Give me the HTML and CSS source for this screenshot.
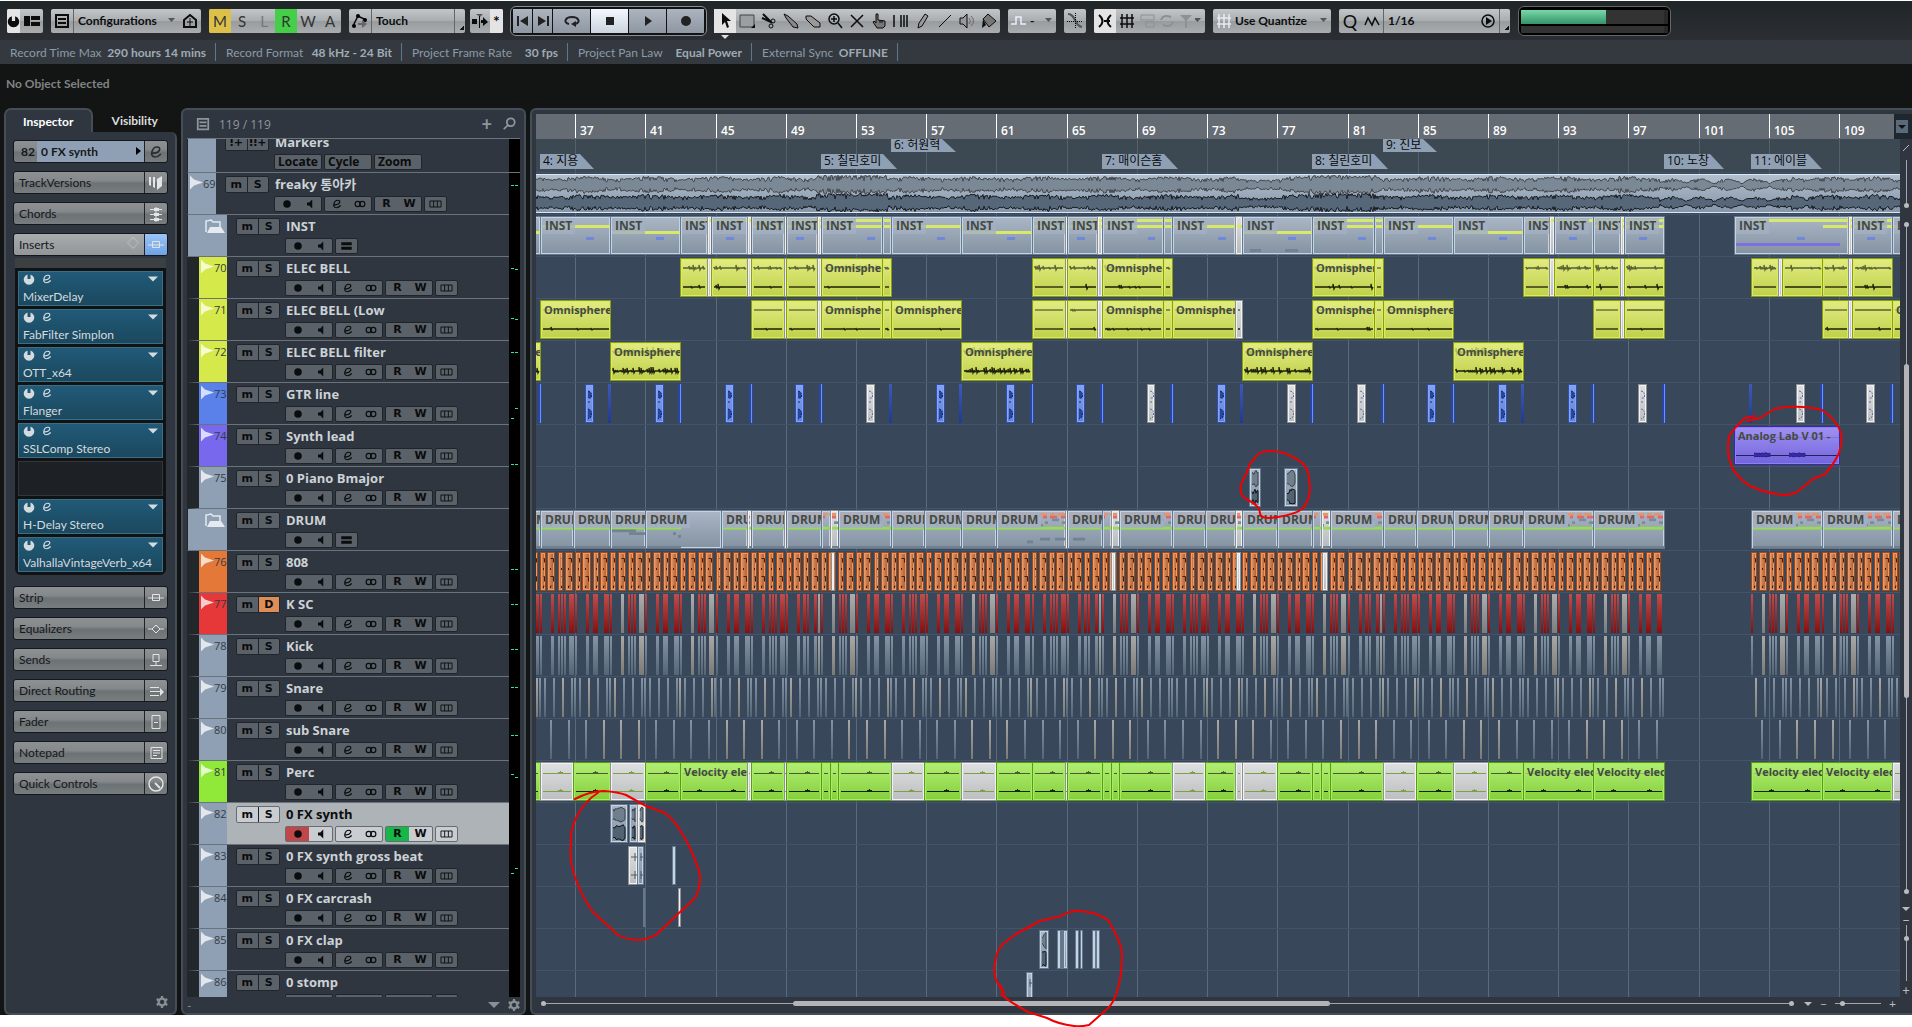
FILE: index.html
```html
<!DOCTYPE html>
<html lang="en">
<head>
    <meta charset="utf-8">
    <title>Project</title>
    <link rel="stylesheet" href="styles.css">
</head>
<body>
    <svg class="sprite">
        <symbol id="power2" viewBox="0 0 16 16"><path fill="currentColor" d="M6 2v6h4V2a7 7 0 1 1-4 0z"/></symbol>
        <symbol id="layout" viewBox="0 0 16 16"><path fill="currentColor" d="M0 3h6v10H0zM7 3h9v4H7zM7 9h9v4H7z"/></symbol>
        <symbol id="list" viewBox="0 0 16 16"><path fill="none" stroke="currentColor" stroke-width="2" d="M2 2h12v12H2zM4 6h8M4 10h8"/></symbol>
        <symbol id="home" viewBox="0 0 16 16"><path fill="none" stroke="currentColor" stroke-width="2" d="M2 7l6-5 6 5v7H2z"/><path stroke="currentColor" d="M8 5v8M5 9h6"/></symbol>
        <symbol id="auto" viewBox="0 0 16 16"><path fill="none" stroke="currentColor" stroke-width="1.500" d="M1 13L6 3l8 4"/><circle cx="6" cy="3" r="2"/><circle cx="13" cy="7" r="2"/><circle cx="2" cy="13" r="2"/><path fill="#666" d="M6 10h4V7l5 4-5 4v-3H6z"/></symbol>
        <symbol id="scroll" viewBox="0 0 16 16"><path fill="currentColor" d="M0 6h5v5H0zM9 7h2V4l5 5-5 4v-3H9z"/><path fill="#555" d="M4 1h7L8 4z"/><path stroke="currentColor" d="M7.500 3v12"/></symbol>
        <symbol id="prev" viewBox="0 0 16 16"><path fill="currentColor" d="M2 3h2v10H2zM13 3v10L5 8z"/></symbol>
        <symbol id="next" viewBox="0 0 16 16"><path fill="currentColor" d="M12 3h2v10h-2zM3 3v10l8-5z"/></symbol>
        <symbol id="cycle" viewBox="0 0 16 16"><path fill="none" stroke="currentColor" stroke-width="2" d="M5 11C-1 10 1 4 8 4s9 6 3 7"/><path fill="currentColor" d="M7 11l5-3v6z"/></symbol>
        <symbol id="stop" viewBox="0 0 16 16"><path fill="currentColor" d="M4 4h8v8H4z"/></symbol>
        <symbol id="play" viewBox="0 0 16 16"><path fill="currentColor" d="M5 3l7 5-7 5z"/></symbol>
        <symbol id="rec" viewBox="0 0 16 16"><circle cx="8" cy="8" r="5" fill="currentColor"/></symbol>
        <symbol id="arrow" viewBox="0 0 16 16"><path fill="currentColor" d="M5 0v12l3-3 2 6 2-1-2-6h4z"/></symbol>
        <symbol id="range" viewBox="0 0 16 16"><path fill="#999fa3" stroke="#444" d="M1 2h14v12H1z"/><path fill="currentColor" d="M16 11v4h-4z"/></symbol>
        <symbol id="scissors" viewBox="0 0 16 16"><path fill="none" stroke="currentColor" stroke-width="2" d="M2 1l9 9M1 5l9 4"/><circle cx="12" cy="8" r="2" fill="none" stroke="currentColor"/><circle cx="10" cy="13" r="2" fill="none" stroke="currentColor"/></symbol>
        <symbol id="glue" viewBox="0 0 16 16"><path fill="#888" stroke="currentColor" d="M1 1l4 2 9 8 1 4-5-1-7-9z"/></symbol>
        <symbol id="erase" viewBox="0 0 16 16"><path fill="#999" stroke="currentColor" d="M1 3h5l9 7v4H9L1 6z"/></symbol>
        <symbol id="zoom" viewBox="0 0 16 16"><circle cx="7" cy="6" r="5" fill="none" stroke="currentColor" stroke-width="1.500"/><path stroke="currentColor" stroke-width="1.500" d="M4 6h6M7 3v6M11 10l4 5"/></symbol>
        <symbol id="mute" viewBox="0 0 16 16"><path stroke="currentColor" stroke-width="1.500" d="M2 2l12 12M14 2L2 14"/></symbol>
        <symbol id="hand" viewBox="0 0 16 16"><path fill="#777" stroke="currentColor" d="M5 8V1h2v6l7 1v5l-2 2H6L2 9l1-1 2 2zM9 7v3M11 7v3"/></symbol>
        <symbol id="comp" viewBox="0 0 16 16"><path stroke="currentColor" stroke-width="1.500" d="M1 2v12M8 2v12M11 2v12M14 2v12"/></symbol>
        <symbol id="pencil" viewBox="0 0 16 16"><path fill="#999" stroke="currentColor" d="M10 1l3 2-6 10-4 2 1-5z"/></symbol>
        <symbol id="line" viewBox="0 0 16 16"><path stroke="currentColor" d="M2 14L14 2"/></symbol>
        <symbol id="speaker" viewBox="0 0 16 16"><path fill="#999" stroke="currentColor" d="M1 5h3l4-4v14l-4-4H1z"/><path fill="none" stroke="#666" d="M10 5q3 3 0 6M12 3q5 5 0 10"/></symbol>
        <symbol id="paint" viewBox="0 0 16 16"><path fill="#777" stroke="currentColor" d="M7 1l8 7-7 6-6-8z"/><path fill="currentColor" d="M2 6l3 6-4 3z"/></symbol>
        <symbol id="step" viewBox="0 0 16 16"><path fill="none" stroke="#eef" stroke-width="1.500" d="M0 11h5V4h5v7h5"/></symbol>
        <symbol id="cross" viewBox="0 0 16 16"><path fill="none" stroke="#555" stroke-width="2" d="M1 1c8 0 6 12 14 13"/><path stroke="#000" stroke-dasharray="1 1" d="M8.500 0v16M0 8.500h16"/></symbol>
        <symbol id="snap" viewBox="0 0 16 16"><path fill="none" stroke="currentColor" stroke-width="2" d="M2 2q7 6 0 12M14 2q-7 6 0 12M7 8h6"/></symbol>
        <symbol id="grid" viewBox="0 0 16 16"><path stroke="currentColor" stroke-width="1.500" d="M3 1v14M8 1v14M13 1v14M1 5h14M1 11h14"/></symbol>
        <symbol id="quant" viewBox="0 0 16 16"><path fill="none" stroke="currentColor" d="M1 2h13v5H1zM6 9h8v5H6z"/></symbol>
        <symbol id="loop" viewBox="0 0 16 16"><path fill="none" stroke="currentColor" stroke-width="2" d="M2 7q2-6 10-3M14 9q-2 6-10 3"/></symbol>
        <symbol id="tee" viewBox="0 0 16 16"><path fill="currentColor" d="M2 2h12L9 7v8H7V7z"/></symbol>
        <symbol id="zig" viewBox="0 0 16 16"><path fill="none" stroke="currentColor" stroke-width="1.500" d="M1 12l3-7 4 7 3-7 4 7"/></symbol>
        <symbol id="go" viewBox="0 0 16 16"><circle cx="8" cy="8" r="6" fill="none" stroke="currentColor" stroke-width="1.500"/><path fill="currentColor" d="M6 4l6 4-6 4z"/></symbol>
        <symbol id="edit" viewBox="0 0 16 16"><path fill="none" stroke="currentColor" stroke-width="1.600" d="M4 9c8 1 10-6 5-6S1 13 7 13q3 0 6-3"/></symbol>
        <symbol id="down" viewBox="0 0 16 16"><path fill="currentColor" d="M0 4h16l-8 8z"/></symbol>
        <symbol id="gear" viewBox="0 0 16 16"><circle cx="8" cy="8" r="4.500" fill="none" stroke="currentColor" stroke-width="3"/><path stroke="currentColor" stroke-width="3" d="M8 0v4M8 12v4M1 4l3 2M12 10l3 2M15 4l-3 2M4 10l-3 2"/></symbol>
        <symbol id="search" viewBox="0 0 16 16"><circle cx="10" cy="6" r="4.500" fill="none" stroke="currentColor" stroke-width="2"/><path stroke="currentColor" stroke-width="2" d="M7 9l-5 5"/></symbol>
        <symbol id="versions" viewBox="0 0 16 16"><path fill="currentColor" d="M1 2h2v9l-2-1zM5 2h2v11l-2-1zM9 4l5-3v10l-5 4z"/></symbol>
        <symbol id="chords" viewBox="0 0 16 16"><path stroke="currentColor" d="M2 3.500h12M2 8.500h12M2 13.500h12M8 1v15"/><path fill="currentColor" d="M6 2h5v3H6zM6 7h5v3H6zM6 12h5v3H6z"/></symbol>
        <symbol id="insert" viewBox="0 0 16 16"><path fill="none" stroke="currentColor" d="M0 8h16M4.500 4.500h7v6h-7z"/></symbol>
        <symbol id="eq" viewBox="0 0 16 16"><path fill="none" stroke="currentColor" d="M0 8h4l4-4 4 4-4 4-4-4M12 8h4"/></symbol>
        <symbol id="send" viewBox="0 0 16 16"><path fill="none" stroke="currentColor" d="M5 2.500h6v7H5zM8 10v4M2 13.500h12"/></symbol>
        <symbol id="route" viewBox="0 0 16 16"><path stroke="currentColor" d="M2 4.500h9M2 8.500h10M2 12.500h9"/><path fill="currentColor" d="M12 5l4 4-4 4z"/></symbol>
        <symbol id="fader" viewBox="0 0 16 16"><path fill="none" stroke="currentColor" d="M4 1.500h8v13H4zM6 8.500h4"/></symbol>
        <symbol id="note" viewBox="0 0 16 16"><path fill="none" stroke="currentColor" d="M3 2.500h11v11H3zM5 5.500h7M5 8h7M5 10.500h4"/></symbol>
        <symbol id="knob" viewBox="0 0 16 16"><circle cx="8" cy="8" r="7" fill="none" stroke="currentColor" stroke-width="1.500"/><path stroke="currentColor" stroke-width="2" d="M7 7l5 5"/></symbol>
        <symbol id="monitor" viewBox="0 0 16 16"><path fill="currentColor" d="M4 6h3l4-4v12l-4-4H4z"/></symbol>
        <symbol id="rings" viewBox="0 0 16 16"><g fill="none" stroke="currentColor" stroke-width="1.500"><circle cx="5" cy="8" r="3.500"/><circle cx="11" cy="8" r="3.500"/></g></symbol>
        <symbol id="lanes" viewBox="0 0 16 16"><path fill="none" stroke="currentColor" stroke-width="1.200" d="M.600 4h14.800v8H.600zM5.500 4v8M10.500 4v8"/></symbol>
        <symbol id="equal" viewBox="0 0 16 16"><path fill="currentColor" d="M1 3h14v4H1zM1 9h14v4H1z"/></symbol>
        <symbol id="folder" viewBox="0 0 20 16"><path fill="none" stroke="#e4eaf0" stroke-width="1.500" d="M1 13V2l5-1 2 2h7v5"/><path fill="#e4eaf0" d="M5 8h11l4 6H2z"/></symbol>
        <symbol id="wedge" viewBox="0 0 13 16"><path fill="#fff" opacity=".75" d="M0 1l4 4 9 3-9 3-4 4z"/></symbol>
    </svg>

    <div class="app">
        <div class="toolbar">
            <div class="group g-setup">
                <button class="on w-small" aria-label="Activate project"><svg><use href="#power2"/></svg></button>
                <button class="fill" aria-label="Window layout"><svg><use href="#layout"/></svg></button>
            </div>
            <div class="group g-config">
                <button class="w-tool" aria-label="Toolbar elements"><svg><use href="#list"/></svg></button>
                <select class="fill caret" aria-label="Configurations"><option>Configurations</option></select>
                <button class="w-tool" aria-label="Constrain delay"><svg><use href="#home"/></svg></button>
            </div>
            <div class="group letters">
                <button class="mute-on">M</button><button>S</button><button class="dim">L</button><button class="read-on">R</button><button>W</button><button>A</button>
            </div>
            <div class="group g-touch">
                <button class="w-tool" aria-label="Automation panel"><svg><use href="#auto"/></svg></button>
                <select class="fill" aria-label="Automation mode"><option>Touch</option></select>
                <button class="corner" aria-label="More automation"></button>
            </div>
            <div class="group g-scroll">
                <button class="fill" aria-label="Auto scroll"><svg><use href="#scroll"/></svg></button>
                <button class="on w-small star">*</button>
            </div>
            <div class="transport">
                <button aria-label="Previous marker"><svg><use href="#prev"/></svg></button>
                <button aria-label="Next marker"><svg><use href="#next"/></svg></button>
                <button class="wide" aria-label="Cycle"><svg><use href="#cycle"/></svg></button>
                <button class="wide lit" aria-label="Stop"><svg><use href="#stop"/></svg></button>
                <button class="wide" aria-label="Play"><svg><use href="#play"/></svg></button>
                <button class="wide" aria-label="Record"><svg><use href="#rec"/></svg></button>
            </div>
            <div class="group tools">
                <button class="on" aria-label="Select"><svg><use href="#arrow"/></svg></button>
                <button aria-label="Range"><svg><use href="#range"/></svg></button>
                <button aria-label="Split"><svg><use href="#scissors"/></svg></button>
                <button aria-label="Glue"><svg><use href="#glue"/></svg></button>
                <button aria-label="Erase"><svg><use href="#erase"/></svg></button>
                <button aria-label="Zoom"><svg><use href="#zoom"/></svg></button>
                <button aria-label="Mute"><svg><use href="#mute"/></svg></button>
                <button aria-label="Time warp"><svg><use href="#hand"/></svg></button>
                <button aria-label="Comp"><svg><use href="#comp"/></svg></button>
                <button aria-label="Draw"><svg><use href="#pencil"/></svg></button>
                <button aria-label="Line"><svg><use href="#line"/></svg></button>
                <button aria-label="Play tool"><svg><use href="#speaker"/></svg></button>
                <button aria-label="Color"><svg><use href="#paint"/></svg></button>
            </div>
            <div class="group g-nudge">
                <button class="w-tool" aria-label="Color menu"><svg><use href="#step"/></svg></button>
                <select class="fill caret plain" aria-label="Event color"><option>-</option></select>
            </div>
            <div class="group">
                <button class="w-tool" aria-label="Snap to zero crossing"><svg><use href="#cross"/></svg></button>
            </div>
            <div class="group g-snap">
                <button class="on w-tool" aria-label="Snap"><svg><use href="#snap"/></svg></button>
                <button class="w-tool" aria-label="Grid"><svg><use href="#grid"/></svg></button>
                <button class="faint" aria-label="Grid relative"><svg><use href="#quant"/></svg></button>
                <button class="faint" aria-label="Events"><svg><use href="#loop"/></svg></button>
                <button class="faint" aria-label="Cursor"><svg><use href="#tee"/></svg></button>
                <button class="caret fill" aria-label="Snap type"></button>
            </div>
            <div class="group g-use">
                <button class="w-tool pale" aria-label="Grid type"><svg><use href="#grid"/></svg></button>
                <select class="fill caret plain" aria-label="Grid type list"><option>Use Quantize</option></select>
            </div>
            <div class="group g-quant">
                <button class="w-tool quantize">Q</button>
                <button class="w-tool" aria-label="Soft quantize"><svg><use href="#zig"/></svg></button>
                <select class="fill" aria-label="Quantize preset"><option>1/16</option></select>
                <button class="w-tool" aria-label="Quantize panel"><svg><use href="#go"/></svg></button>
                <button class="corner" aria-label="More quantize"></button>
            </div>
            <div class="load">
                <div class="load-bar"><i></i></div>
                <div class="load-bar thin"></div>
            </div>
        </div>

        <div class="info">
            <div class="info-time"><span>Record Time Max</span><b>290 hours 14 mins</b></div>
            <div class="info-format"><span>Record Format</span><b>48 kHz - 24 Bit</b></div>
            <div class="info-rate"><span>Project Frame Rate</span><b>30 fps</b></div>
            <div class="info-pan"><span>Project Pan Law</span><b>Equal Power</b></div>
            <div class="info-sync"><span>External Sync</span><b>OFFLINE</b></div>
        </div>
        <div class="object-line">No Object Selected</div>

        <div class="workspace">
            <div class="inspector">
                <div class="tabs">
                    <button class="tab active">Inspector</button>
                    <button class="tab">Visibility</button>
                </div>
                <div class="inspector-body">
                    <div class="section title">
                        <span class="num">82</span>
                        <button class="section-name">0 FX synth<i></i></button>
                        <button class="section-icon" aria-label="Edit channel"><svg><use href="#edit"/></svg></button>
                    </div>
                    <div class="section"><button class="section-name">TrackVersions</button><button class="section-icon" aria-label="Versions"><svg><use href="#versions"/></svg></button></div>
                    <div class="section"><button class="section-name">Chords</button><button class="section-icon" aria-label="Chord options"><svg><use href="#chords"/></svg></button></div>
                    <div class="section open"><button class="section-name">Inserts<em>◇</em></button><button class="section-icon" aria-label="Bypass inserts"><svg><use href="#insert"/></svg></button></div>
                    <div class="rack" id="rack"></div>
                    <div class="section"><button class="section-name">Strip</button><button class="section-icon" aria-label="Bypass strip"><svg><use href="#insert"/></svg></button></div>
                    <div class="section"><button class="section-name">Equalizers</button><button class="section-icon" aria-label="Bypass EQ"><svg><use href="#eq"/></svg></button></div>
                    <div class="section"><button class="section-name">Sends</button><button class="section-icon" aria-label="Bypass sends"><svg><use href="#send"/></svg></button></div>
                    <div class="section"><button class="section-name">Direct Routing</button><button class="section-icon" aria-label="Routing"><svg><use href="#route"/></svg></button></div>
                    <div class="section"><button class="section-name">Fader</button><button class="section-icon" aria-label="Channel fader"><svg><use href="#fader"/></svg></button></div>
                    <div class="section"><button class="section-name">Notepad</button><button class="section-icon" aria-label="Notes"><svg><use href="#note"/></svg></button></div>
                    <div class="section"><button class="section-name">Quick Controls</button><button class="section-icon" aria-label="Quick control options"><svg><use href="#knob"/></svg></button></div>
                    <div class="panel-foot"><svg><use href="#gear"/></svg></div>
                </div>
            </div>

            <div class="tracks">
                <div class="tracks-head">
                    <svg><use href="#list"/></svg><span>119 / 119</span>
                    <b>+</b><svg class="find"><use href="#search"/></svg>
                </div>
                <div class="track-list" id="track-list"></div>
                <div class="panel-foot"><span>-</span><svg><use href="#down"/></svg><svg><use href="#gear"/></svg></div>
            </div>

            <div class="arrange">
                <div class="ruler" id="ruler"><button class="ruler-menu" aria-label="Ruler format"></button></div>
                <div class="canvas" id="canvas"></div>
                <div class="vscroll">
                    <svg class="slash" viewBox="0 0 12 12"><path d="M3 9l6-6" stroke="#bbb"/></svg>
                    <div class="vline top"></div>
                    <div class="vline main"><i></i></div>
                    <b class="tri"></b>
                    <span>−</span>
                    <input type="range" class="vzoom" value="78" aria-label="Vertical zoom">
                    <span>+</span>
                </div>
                <div class="hscroll">
                    <div class="hline"><i></i></div>
                    <b class="tri"></b>
                    <span>−</span>
                    <input type="range" class="hzoom" value="12" aria-label="Horizontal zoom">
                    <span>+</span>
                </div>
            </div>
        </div>
    </div>

    <!-- red pen notes -->
    <svg class="pen">
        <path d="M1255 458Q1258 451 1270 451T1293 457Q1306 463 1308 473T1310 490Q1308 504 1302 509T1278 517T1260 513T1248 500T1243 480T1249 466T1254 459"/>
        <path d="M1755 416L1745 418L1735 428L1729 436Q1727 450 1729 458L1733 470Q1742 481 1750 486Q1768 494 1785 495Q1793 494 1797 492L1813 479L1825 474Q1834 464 1839 453Q1843 438 1841 433Q1836 419 1822 410Q1805 406 1790 407Q1778 407 1773 410L1760 418L1747 421"/>
        <path d="M575 799Q590 791 604 791Q618 792 626 795L646 806L665 813Q676 822 681 832Q690 846 695 860Q701 874 700 880Q699 894 693 900L679 913L657 934Q648 940 637 940Q625 939 618 935L593 912Q582 896 578 885Q568 862 571 843Q570 832 575 820Q583 802 599 792"/>
        <path d="M1001 986L1004 994L996 980Q993 970 995 964Q996 950 1004 943L1016 934L1040 921L1061 916Q1072 910 1080 911Q1096 912 1108 920Q1120 940 1122 952Q1122 975 1118 988Q1114 1004 1106 1010L1089 1025Q1080 1027 1074 1026Q1058 1024 1047 1018L1028 1012Q1008 1001 1001 994"/>
    </svg>
    <script src="app.js"></script>
</body>
</html>
```
FILE: styles.css
```css
* {
    box-sizing: border-box;
}
body {
    margin: 0;
    background: #fff;
    font-family: Lato, "Noto Sans CJK KR", sans-serif;
    font-size: 12px;
    overflow: hidden;
}
button, select {
    font: inherit;
    color: inherit;
    border: 0;
    padding: 0;
    margin: 0;
    background: none;
    border-radius: 0;
}
svg {
    width: 16px;
    height: 16px;
    display: block;
    flex: none;
}
.sprite {
    position: absolute;
    width: 0;
    height: 0;
}
.app {
    height: calc(100vh - 12px);
    display: flex;
    flex-direction: column;
    background: #131514;
    border-top: 1px solid #fff;
}

/* toolbar */
.toolbar {
    height: 39px;
    flex: none;
    display: flex;
    align-items: center;
    gap: 8px;
    padding: 0 7px;
    background: linear-gradient(#202528, #2b2f33);
}
.group {
    height: 24px;
    flex: none;
    display: flex;
    border-radius: 2px;
    overflow: hidden;
    background: linear-gradient(#c2c6c8, #a9adb0 50%, #979c9f 51%, #a9adb0);
    color: #0c0c0c;
}
.group button {
    display: flex;
    align-items: center;
    justify-content: center;
}
.group select {
    appearance: none;
    font-weight: bold;
    padding: 0 4px;
    min-width: 0;
    border-left: 1px solid #63676a;
}
.group select.plain { border-left: 0; padding: 0; }
.group .fill { flex: 1; }
.w-tool { width: 22px; }
.w-small { width: 13px; }
.group .on { background: #e4e4e4; }
.g-setup { width: 36px; }
.g-setup .on svg { width: 13px; }
.g-config { width: 150px; }
.g-touch { width: 116px; }
.g-scroll { width: 33px; margin-left: -3px; }
.g-nudge { width: 48px; }
.g-snap { width: 111px; }
.g-use { width: 118px; }
.g-quant { width: 171px; }
.letters button {
    width: 22px;
    font-size: 15px;
    color: #333;
}
.letters .mute-on { background: #dcc04a; }
.letters .read-on { background: #45cf48; }
.letters .dim { color: #777; }
.group .faint { width: 19px; color: #8d9193; }
.group .pale { color: #e8ebf2; }
.quantize { font-size: 18px; }
.star { font-size: 16px; font-weight: bold; }
.caret {
    background: url("data:image/svg+xml,%3Csvg xmlns='http://www.w3.org/2000/svg' width='8' height='5'%3E%3Cpath d='M0 0h7L3.500 4z' fill='%23555'/%3E%3C/svg%3E") no-repeat right 3px center;
}
.group .corner {
    width: 11px;
    border-left: 1px solid #63676a;
    background: linear-gradient(135deg, transparent 50%, #111 50%) no-repeat 5px 17px / 4px 4px;
}
.transport {
    height: 30px;
    display: flex;
    align-items: center;
    gap: 1px;
    padding: 0 2px;
    margin-left: -1px;
    margin-right: -1px;
    border: 1px solid #8b8f93;
    border-radius: 6px;
    background: #101214;
    color: #222;
}
.transport button {
    width: 19px;
    height: 24px;
    display: flex;
    align-items: center;
    justify-content: center;
    background: linear-gradient(#abb4bf, #8e97a2);
}
.transport .wide { width: 37px; }
.transport .lit { background: linear-gradient(#f2f7ff, #ccd4de); }
.tools { overflow: visible; }
.tools button { width: 22px; position: relative; }
.tools .on::after {
    content: "";
    position: absolute;
    top: 26px;
    left: 7px;
    border: 4px solid transparent;
    border-top-color: #ddd;
    border-bottom: 0;
}
.load {
    width: 153px;
    height: 30px;
    padding: 3px 2px;
    border: 1px solid #63676a;
    border-radius: 6px;
    background: #000;
}
.load-bar { height: 14px; background: #333; border-right: 4px solid #292929; }
.load-bar i { display: block; width: 85px; height: 14px; background: linear-gradient(#78d8a8, #359468); }
.load-bar.thin { height: 7px; margin-top: 2px; }

.info {
    height: 24px;
    flex: none;
    display: flex;
    align-items: center;
    background: #33393e;
    color: #8d9aa8;
}
.info div {
    height: 18px;
    display: flex;
    align-items: center;
    justify-content: space-between;
    padding: 0 9px 0 10px;
    border-right: 1px solid #60768c;
    white-space: nowrap;
}
.info b { color: #9faab6; }
.info .info-time { width: 216px; }
.info .info-format { width: 186px; }
.info .info-rate { width: 166px; }
.info .info-pan { width: 184px; }
.info .info-sync { width: 146px; }
.object-line {
    height: 44px;
    flex: none;
    line-height: 40px;
    padding-left: 6px;
    font-weight: bold;
    color: #7f8485;
}

.workspace {
    flex: 1;
    min-height: 0;
    display: grid;
    grid-template-columns: 173px 345px minmax(0, 1fr);
    grid-template-rows: minmax(0, 1fr);
    gap: 4px;
    padding-left: 4px;
}

/* inspector */
.inspector { display: flex; flex-direction: column; min-height: 0; }
.tabs { display: flex; height: 24px; flex: none; }
.tab {
    flex: 1;
    color: #ddd;
    font-weight: bold;
}
.tab.active {
    background: #2f3640;
    border: 2px solid #454d57;
    border-bottom: 0;
    border-radius: 7px 7px 0 0;
    color: #fff;
}
.inspector-body {
    flex: 1;
    display: flex;
    flex-direction: column;
    gap: 8px;
    padding: 8px 7px 3px;
    border: 2px solid #454d57;
    border-top: 0;
    border-radius: 0 6px 6px 6px;
    background: #2f3640;
}
.section {
    height: 23px;
    flex: none;
    display: flex;
    border: 1px solid #15181b;
    border-radius: 3px;
    overflow: hidden;
    background: linear-gradient(#8d9194, #85898c 40%, #6d7275 55%, #787d80);
    color: #15181a;
}
.section-name {
    flex: 1;
    text-align: left;
    padding-left: 5px;
    position: relative;
}
.section .section-icon {
    width: 23px;
    border-left: 1px solid #222;
    color: #e2e4e6;
    display: flex;
    align-items: center;
    justify-content: center;
}
.section.title .section-name { background: #8fa0b5; font-weight: bold; padding-left: 4px; }
.section.title .section-name i {
    position: absolute;
    right: 3px;
    top: 6px;
    border: 4px solid transparent;
    border-left: 5px solid #000;
    border-right: 0;
}
.section.title .section-icon { color: #2a2c2e; }
.section .num { width: 23px; line-height: 21px; text-align: right; padding-right: 2px; font-weight: bold; }
.section.open { background: linear-gradient(#a9acae, #939699); }
.section.open .section-icon { background: linear-gradient(#9cc4f6, #6ea2e6); }
.section em { position: absolute; right: 5px; top: 3px; line-height: 14px; font-style: normal; color: #c5c9cc; }
.rack {
    margin: -6px 2px 3px;
    padding: 3px;
    border-top: 10px solid #3c4043;
    border-radius: 0 0 6px 6px;
    background: #101214;
    display: grid;
    gap: 3px;
}
.slot {
    height: 35px;
    padding: 1px 4px;
    background: linear-gradient(#215a78, #1b485e);
    border: 1px solid #3b6f86;
    color: #d4dbdf;
}
.slot.empty { background: #1d2025; border-color: #33373c; }
.slot div { display: flex; gap: 6px; height: 13px; }
.slot svg { width: 12px; height: 12px; }
.slot svg:last-child { margin-left: auto; width: 10px; }
.slot p { margin: 3px 0 0; line-height: 16px; white-space: nowrap; }
.panel-foot {
    margin-top: auto;
    height: 16px;
    flex: none;
    display: flex;
    align-items: center;
    justify-content: flex-end;
    gap: 8px;
    color: #8b8f93;
}
.panel-foot svg { width: 12px; height: 12px; }
.panel-foot span { margin-right: auto; }

/* track list */
.tracks {
    display: flex;
    flex-direction: column;
    min-height: 0;
    padding: 0 4px;
    border: 2px solid #454d57;
    border-radius: 6px;
    background: #2f3640;
}
.tracks-head {
    height: 29px;
    flex: none;
    display: flex;
    align-items: center;
    padding: 0 4px 0 9px;
    border-bottom: 1px solid #6a727b;
    color: #8f959a;
}
.tracks-head svg { width: 14px; height: 14px; }
.tracks-head span { margin-left: 9px; font-family: "Open Sans", sans-serif; }
.tracks-head b { margin-left: auto; font-size: 18px; line-height: 16px; }
.tracks-head .find { margin-left: 10px; }
.track-list { flex: 1; min-height: 0; overflow: hidden; }
.track {
    height: 42px;
    display: flex;
    border-bottom: 1px solid #6a727b;
    border-left: 1px solid #22272b;
    color: #ccd2d6;
}
.track.nested { border-left: 12px solid #22272b; }
.track.markers { height: 34px; align-items: flex-end; overflow: hidden; }
.track-color {
    width: 28px;
    height: 100%;
    flex: none;
    display: flex;
    align-items: flex-start;
    justify-content: space-between;
    padding: 1px 2px 0 2px;
    font: 11px/20px "Open Sans", sans-serif;
    color: #343b44;
}
.track-color.deep { width: 39px; justify-content: flex-end; }
.track-color svg { width: 13px; height: 17px; }
.track-color .folder { width: 20px; height: 16px; margin-top: 3px; }
.track-body {
    flex: 1;
    display: grid;
    grid-template-columns: 44px 1fr;
    grid-template-rows: 17px 16px;
    gap: 3px 5px;
    padding: 3px 0 0 9px;
}
.track.markers .track-body { padding-bottom: 2px; }
.track-name {
    font: bold 13px/17px "Open Sans", "Noto Sans CJK KR", sans-serif;
    white-space: nowrap;
    padding-left: 1px;
}
.box {
    display: flex;
    border: 1px solid #20252a;
    border-radius: 2px;
    background: #5a6168;
    color: #0b0c0d;
}
.box button {
    flex: 1;
    display: flex;
    align-items: center;
    justify-content: center;
    font: bold 11px/14px "DejaVu Sans", sans-serif;
}
.box svg { width: 12px; height: 12px; }
.ms button + button { border-left: 1px solid #20252a; }
.controls { grid-column: 2; display: flex; gap: 2px; }
.controls .box { width: 48px; }
.controls .box.one { width: 23px; }
.controls .box.one svg { width: 15px; }
.controls .box.word button { font: bold 12px/14px "Open Sans", sans-serif; justify-content: flex-start; padding-left: 3px; }
.track.selected .track-body { background: #aeb3b7; color: #0b0c0d; }
.track.selected .box { background: #c9cdd1; border-color: #666c72; }
.track.selected .rec-on { background: #c0464a; }
.track.selected .read-on { background: #16b648; }
.box .defeat { background: #de8c58; }
.meter {
    width: 11px;
    height: 42px;
    flex: none;
    position: relative;
    background: #000;
}
.meter i { position: absolute; width: 3px; height: 1px; background: #2fe0b4; }

/* arrange window */
.arrange {
    display: grid;
    grid-template-columns: minmax(0, 1fr) 12px;
    grid-template-rows: 25px minmax(0, 1fr) 16px;
    padding: 4px 0 0 4px;
    border: 2px solid #454d57;
    border-right: 0;
    border-radius: 6px 0 0 6px;
    background: #2f3640;
}
.ruler {
    grid-column: 1 / 3;
    position: relative;
    overflow: hidden;
    background: linear-gradient(90deg, #666c74 calc(100% - 18px), #1e262e calc(100% - 18px));
}
.ruler span {
    position: absolute;
    top: 0;
    height: 24px;
    padding-left: 4px;
    border-left: 1px solid #fff;
    color: #fff;
    font: 600 12px/33px "Open Sans", sans-serif;
}
.ruler-menu {
    position: absolute;
    right: 4px;
    top: 6px;
    width: 12px;
    height: 13px;
    background: #5a6a7a;
}
.ruler-menu::after {
    content: "";
    position: absolute;
    left: 2px;
    top: 5px;
    border: 4px solid transparent;
    border-top-color: #111;
    border-bottom: 0;
}
.canvas {
    position: relative;
    overflow: hidden;
    background: #38485a;
}
.gridline { position: absolute; top: 0; bottom: 0; width: 1px; background: #5a6b7c; }
.lane { position: relative; height: 42px; border-bottom: 1px solid #43546a; }
.lane.flags { height: 34px; background: rgba(70, 74, 66, .3); }
.flag {
    position: absolute;
    top: 15px;
    height: 15px;
    padding-left: 3px;
    background: #8fa0b5;
    clip-path: polygon(0 0, calc(100% - 14px) 0, 100% 100%, 0 100%);
    color: #080808;
    font: 12px/13px "Open Sans", "Noto Sans CJK KR", sans-serif;
    white-space: nowrap;
}
.flag.upper { top: 0; height: 13px; line-height: 11px; }
.clip {
    position: absolute;
    top: 1px;
    height: 39px;
    overflow: hidden;
    border: 1px solid #8c9a1e;
    background: linear-gradient(#e1ec82, #bfd04a);
    box-shadow: inset 0 0 0 1px #d9ec5a;
    color: #24270e;
}
.clip svg { position: absolute; top: 0; left: 0; width: 100%; height: 100%; }
.clip span {
    position: absolute;
    left: 3px;
    top: 0;
    font: bold 11px/17px "Open Sans", sans-serif;
    color: #444a42;
    white-space: nowrap;
}
.clip.green { background: linear-gradient(#b2ee74, #84cf3a); border-color: #5c9a1e; box-shadow: inset 0 0 0 1px #a4ee60; }
.clip.blue { background: linear-gradient(#86a2ee, #5f80dc); border-color: #2f50b0; box-shadow: inset 0 0 0 1px #84a4f4; }
.clip.violet { background: linear-gradient(#a092f2, #7264dc); border-color: #3a2ca0; box-shadow: inset 0 0 0 1px #8c80f6; }
.clip.grey, .clip.folder { background: linear-gradient(#aab6c5, #8492a2); border-color: #66788c; box-shadow: inset 0 0 0 1px #c2d4e6; color: #2a3238; }
.clip.orange { background: linear-gradient(90deg, #f09a68, #b86a3c 70%); border-color: #a04a18; box-shadow: inset 0 0 0 1px #ee9a68; }
.clip.wave { background: linear-gradient(#b2bfce, #8696a8); border-width: 1px 0; border-color: #dbe7f2; box-shadow: none; }
.clip.muted { background: linear-gradient(#dedfe0, #bcbec0); border-color: #8e9092; box-shadow: inset 0 0 0 1px #f2f2f2; color: #8aa05a; }
.clip.folder.muted { background: linear-gradient(#dedede, #b4babf); }
.clip.folder span {
    left: 1px;
    top: 1px;
    min-width: 31px;
    padding: 0 3px;
    font-size: 12px;
    line-height: 16px;
    background: rgba(164, 176, 194, .8);
}
.clip.folder.drums span { min-width: 42px; }
.hit { position: absolute; top: 1px; height: 39px; }
.hit.red { background: linear-gradient(#c04c4c, #861010); }
.hit.ash { background: linear-gradient(#adadad, #7c7c7c); }
.hit.slate { background: linear-gradient(#8494a4, #546676); }
.hit.sand { background: linear-gradient(#a8a8a6, #7c7a76); }
.hit.navy { background: linear-gradient(90deg, #2846a4 50%, #6f92ec 50%, #6f92ec 75%, #2846a4 75%); }
.hit.navy.dark { background: linear-gradient(#3c5ab8, #203a92); }

.vscroll {
    display: flex;
    flex-direction: column;
    align-items: center;
    padding-bottom: 2px;
    color: #bbb;
    line-height: 10px;
    font-size: 13px;
}
.slash { width: 12px; height: 12px; margin: 3px 0 6px; }
.vline { width: 1px; background: #a4a8ac; position: relative; }
.vline.top { height: 46px; margin-bottom: 18px; }
.vline.main { flex: 1; margin-bottom: 15px; }
.vline::after, .vline.main::before, .hline::before, .hline::after {
    content: "";
    position: absolute;
    width: 5px;
    height: 5px;
    border-radius: 50%;
    background: #bbb;
    left: -2px;
    bottom: -2px;
}
.vline.main::before { bottom: auto; top: -2px; }
.vline i { position: absolute; left: -2px; width: 5px; top: 21%; height: 50%; border-radius: 3px; background: #b4b4b8; }
.tri { border: 4px solid transparent; border-top-color: #bbb; border-bottom: 0; }
.vscroll span { margin-top: 4px; }
.hscroll {
    display: flex;
    align-items: center;
    padding: 0 4px 3px 7px;
    gap: 8px;
    color: #bbb;
}
.hline { flex: 1; height: 1px; background: #a4a8ac; position: relative; margin-right: 4px; }
.hline::after { left: auto; right: -2px; }
.hline i { position: absolute; top: -2px; height: 5px; left: 20%; width: 43%; border-radius: 3px; background: #b4b4b8; }
input[type=range] { appearance: none; background: none; margin: 0; }
input::-webkit-slider-runnable-track { background: #a4a8ac; }
input::-webkit-slider-thumb { appearance: none; width: 5px; height: 5px; border-radius: 50%; background: #bbb; }
.hzoom { width: 46px; }
.hzoom::-webkit-slider-runnable-track { height: 1px; }
.hzoom::-webkit-slider-thumb { margin-top: -2px; }
.vzoom { writing-mode: vertical-lr; direction: rtl; height: 56px; width: 6px; }
.vzoom::-webkit-slider-runnable-track { width: 1px; }
.vzoom::-webkit-slider-thumb { margin-left: -2px; }

.pen {
    position: absolute;
    inset: 0;
    width: 100%;
    height: 100%;
    fill: none;
    stroke: #f00000;
    stroke-width: 2;
    stroke-linejoin: round;
    stroke-linecap: round;
    pointer-events: none;
}
```
FILE: app.js
```js
const FIRST_BAR = 35;
const ORIGIN = 4;
const BAR_WIDTH = 17.556;

const barX = bar => Math.round(ORIGIN + (bar - FIRST_BAR) * BAR_WIDTH);
const icon = (name, cls = '') => `<svg class="${cls}"><use href="#${name}"/></svg>`;

// repeatable noise so that waveforms look the same on every load
let seed = 7;
function rnd() {
    seed = (seed * 16807) % 2147483647;
    return seed / 2147483647;
}

const slate = '#8fa0b5';
const lime = '#d5ea4a';
const tracks = [
    { num: 69, name: 'freaky 통아카', color: slate, top: true, meter: [12, 12] },
    { name: 'INST', color: slate, folder: true, meter: [] },
    { num: 70, name: 'ELEC BELL', color: lime, meter: [11, 12] },
    { num: 71, name: 'ELEC BELL (Low', color: lime, meter: [19, 20] },
    { num: 72, name: 'ELEC BELL filter', color: lime, meter: [11, 11] },
    { num: 73, name: 'GTR line', color: '#5a80ea', meter: [35, 25] },
    { num: 74, name: 'Synth lead', color: '#7868ee', meter: [39, 39] },
    { num: 75, name: '0 Piano Bmajor', color: slate, meter: [] },
    { name: 'DRUM', color: slate, folder: true, meter: [] },
    { num: 76, name: '808', color: '#e47838', meter: [18, 18] },
    { num: 77, name: 'K SC', color: '#e63838', meter: [11, 11], defeat: true },
    { num: 78, name: 'Kick', color: slate, meter: [14, 14] },
    { num: 79, name: 'Snare', color: slate, meter: [10, 10] },
    { num: 80, name: 'sub Snare', color: slate, meter: [16, 16] },
    { num: 81, name: 'Perc', color: '#90e838', meter: [13, 16] },
    { num: 82, name: '0 FX synth', color: slate, meter: [], selected: true },
    { num: 83, name: '0 FX synth gross beat', color: slate, meter: [28, 23] },
    { num: 84, name: '0 FX carcrash', color: slate, meter: [] },
    { num: 85, name: '0 FX clap', color: slate, meter: [] },
    { num: 86, name: '0 stomp', color: slate, meter: [] }
];

function trackRow(t) {
    const state = t.selected ? ' selected' : '';
    const nested = t.folder || t.top ? '' : ' nested';
    const badge = t.folder ? icon('folder', 'folder') : icon('wedge') + t.num;
    const more = t.folder
        ? `<div class="box one"><button aria-label="Group editing">${icon('equal')}</button></div>`
        : `<div class="box"><button aria-label="Edit">${icon('edit')}</button><button aria-label="Stereo">${icon('rings')}</button></div>
           <div class="box"><button class="read-on">R</button><button>W</button></div>
           <div class="box one"><button aria-label="Lanes">${icon('lanes')}</button></div>`;
    const meter = t.meter.map((y, i) => `<i style="left:${2 + i * 4}px;top:${y}px"></i>`).join('');
    return `<div class="track${nested}${state}">
        <div class="track-color${t.folder ? ' deep' : ''}" style="background:${t.color}">${badge}</div>
        <div class="track-body">
            <div class="box ms"><button>m</button><button class="${t.defeat ? 'defeat' : ''}">${t.defeat ? 'D' : 'S'}</button></div>
            <div class="track-name">${t.name}</div>
            <div class="controls">
                <div class="box"><button class="rec-on" aria-label="Record enable">${icon('rec')}</button><button aria-label="Monitor">${icon('monitor')}</button></div>
                ${more}
            </div>
        </div>
        <div class="meter">${meter}</div>
    </div>`;
}

document.getElementById('track-list').innerHTML = `<div class="track markers">
        <div class="track-color" style="background:${slate}"></div>
        <div class="track-body">
            <div class="box ms"><button>⁝+</button><button>⁝⁝+</button></div>
            <div class="track-name">Markers</div>
            <div class="controls">
                <div class="box word"><button>Locate</button></div>
                <div class="box word"><button>Cycle</button></div>
                <div class="box word"><button>Zoom</button></div>
            </div>
        </div>
        <div class="meter"></div>
    </div>` + tracks.map(trackRow).join('');

const inserts = ['MixerDelay', 'FabFilter Simplon', 'OTT_x64', 'Flanger', 'SSLComp Stereo', '', 'H-Delay Stereo', 'ValhallaVintageVerb_x64'];
document.getElementById('rack').innerHTML = inserts.map(name => name
    ? `<div class="slot"><div>${icon('power2')}${icon('edit')}${icon('down')}</div><p>${name}</p></div>`
    : '<div class="slot empty"></div>').join('');

// waveform shapes

function lineWave(w, y, step, height, color) {
    let d = `M2 ${y}`;
    for (let x = 2; x < w - 4; x += 2) {
        const h = rnd() < step ? Math.round(rnd() * height) : 0;
        d += `L${x} ${y - h}L${x + 1} ${y + Math.round(h / 2)}L${x + 2} ${y}`;
    }
    return `<path d="${d}" fill="none" stroke="${color}" stroke-width="1.3"/>`;
}

function pulseWave(w, muted, left, title) {
    const pulses = w > 60 ? [w * .27, w * .76] : w > 20 ? [w * .55] : [];
    return [10, 28].map(y => {
        const upper = title ? '#8fbf58' : '#45602a';
        const bumps = title && y < 20 ? '' : pulses.map(x => `M${Math.round(x) - 2} ${y - .5}h5M${Math.round(x) + .5} ${y - 2}v3`).join('');
        return `<path d="M2 ${y}.5H${w - 4}${bumps}" fill="none" stroke="${muted ? '#7da048' : y > 20 ? '#182408' : upper}"/>`;
    }).join('');
}

function envelope(w, y, amp, fill, stroke, x0 = 0) {
    const top = [];
    const bottom = [];
    for (let x = x0; x <= w; x++) {
        const a = typeof amp === 'function' ? amp(x) : amp;
        const h = a * (.75 + rnd() * .35);
        const dip = rnd() < .15 ? .6 : 1;
        top.push(`${x} ${(y - h * dip).toFixed(1)}`);
        bottom.unshift(`${x} ${(y + h * dip * (.8 + rnd() * .2)).toFixed(1)}`);
    }
    return `<path d="M${top.join('L')}L${bottom.join('L')}" fill="${fill}" stroke="${stroke}"/>`;
}

function hooks(w, color) {
    const r = w > 7 ? 5 : 3;
    return `<path d="M2.5 5.500h${r - 2}v4M2.500 17v-2M2.500 23.500h${r - 2}v5M2.500 35v-2h1" fill="none" stroke="${color}"/>`;
}

const canvas = document.getElementById('canvas');
const ruler = document.getElementById('ruler');
for (let bar = 37; bar <= 137; bar += 4) {
    canvas.insertAdjacentHTML('beforeend', `<div class="gridline" style="left:${barX(bar)}px"></div>`);
    if (bar <= 109) {
        ruler.insertAdjacentHTML('beforeend', `<span style="left:${barX(bar)}px">${bar}</span>`);
    }
}

// markers: bar, text, width, upper row
const markers = [
    [35, '4: 지용', 54], [51, '5: 칠린호미', 76], [55, '6: 허원혁', 65, true], [67, '7: 매이슨홈', 76],
    [79, '8: 칠린호미', 76], [83, '9: 진보', 54, true], [99, '10: 노창', 60], [104, '11: 에이블', 71]
];
canvas.insertAdjacentHTML('beforeend', '<div class="lane flags">' + markers.map(([bar, text, w, up]) =>
    `<div class="flag${up ? ' upper' : ''}" style="left:${barX(bar)}px;width:${w}px">${text}</div>`).join('') + '</div>');

// [start bar, end bar, kind]; kinds: n = plain, m = muted, t = with title, x = too short for a title
const bellA = [[47, 48.9, 'n'], [48.9, 49, 'm'], [49, 50.75, 'n'], [50.75, 51, 'm'], [51, 54.5, 't'], [54.5, 55, 'n']];
const bellB = [[63, 64.9, 'n'], [64.9, 65, 'm'], [65, 66.75, 'n'], [66.75, 67, 'm'], [67, 70.5, 't'], [70.5, 71, 'n'], [79, 82.5, 't'], [82.5, 83, 'n']];
const bell = [
    [43, 44.5, 'n'], [44.5, 44.75, 'm'], [44.75, 46.8, 'n'], [46.8, 47, 'm'], ...bellA, ...bellB,
    [91, 92.5, 'n'], [92.5, 92.75, 'm'], [92.75, 95, 'n'], [95, 96.5, 'n'], [96.5, 96.75, 'm'], [96.75, 99, 'n'],
    [104, 105.5, 'n'], [105.5, 105.75, 'm'], [105.75, 108, 'n'], [108, 109.5, 'n'], [109.5, 109.75, 'm'], [109.75, 112, 'n']
];
const low = [
    [35, 39, 't'], ...bellA, [55, 59, 't'], ...bellB, [71, 74.6, 't'], [74.6, 75, 'm'], [83, 87, 't'],
    [95, 96.5, 'n'], [96.5, 96.75, 'm'], [96.75, 99, 'n'], [108, 109.5, 'n'], [109.5, 109.75, 'm'], [109.75, 112, 'n'], [112, 116, 't']
];
const filter = [[31, 35], [39, 43], [59, 63], [75, 79], [87, 91]].map(c => [...c, 't']);
const gtrMuted = [53, 69, 77, 81, 97, 106, 110];
const gtr = [37, 41, 45, 49, 53, 57, 61, 65, 69, 73, 77, 81, 85, 89, 93, 97, 106, 110]
    .map(b => [b + .55, b + 1, gtrMuted.includes(b) ? 'm' : 'n']);
const inst = [
    [31, 35], [35, 39], [39, 43], [43, 44.5], [44.5, 44.75, 'm'], [44.75, 46.8], [46.8, 47, 'm'], [47, 48.9], [48.9, 49, 'm'],
    [49, 50.75], [50.75, 51, 'm'], [51, 54.5], [54.5, 55, 'x'], [55, 59], [59, 63], [63, 64.9], [64.9, 65, 'm'], [65, 66.75],
    [66.75, 67, 'm'], [67, 70.5], [70.5, 71, 'x'], [71, 74.6], [74.6, 75, 'm'], [75, 79], [79, 82.5], [82.5, 83, 'x'], [83, 87],
    [87, 91], [91, 92.5], [92.5, 92.75, 'm'], [92.75, 95], [95, 96.5], [96.5, 96.75, 'm'], [96.75, 99],
    [103, 109.5], [109.5, 109.75, 'm'], [109.75, 112], [112, 116]
];
const drum = [
    [33, 35], [35, 36.9], [36.9, 39], [39, 41], [41, 45.3], [45.3, 46.8], [46.8, 47, 'm'], [47, 48.9], [48.9, 49, 'm'], [49, 51],
    [51, 51.5, 'x'], [51.5, 52, 'm'], [52, 55], [55, 56.9], [56.9, 59], [59, 61], [61, 64.9], [64.9, 65, 'm'], [65, 67],
    [67, 67.5, 'x'], [67.5, 68, 'm'], [68, 71], [71, 72.9], [72.9, 74.6], [74.6, 75, 'm'], [75, 77], [77, 79],
    [79, 79.5, 'x'], [79.5, 80, 'm'], [80, 83], [83, 84.9], [84.9, 87], [87, 89], [89, 91], [91, 95], [95, 99],
    [104, 108], [108, 112], [112, 116]
];
const perc = [
    [33, 35], [35, 36.9, 'm'], [36.9, 39], [39, 41, 'm'], [41, 43], [43, 46.8, 't'], [46.8, 47, 'm'], [47, 48.9], [48.9, 49, 'm'],
    [49, 51], [51, 51.5], [51.5, 52], [52, 55], [55, 56.9, 'm'], [56.9, 59], [59, 61, 'm'], [61, 63], [63, 64.9], [64.9, 65, 'm'],
    [65, 67], [67, 67.5], [67.5, 68], [68, 71], [71, 72.9, 'm'], [72.9, 74.6], [74.6, 75, 'm'], [75, 77, 'm'], [77, 79],
    [79, 79.5], [79.5, 80], [80, 83], [83, 84.9, 'm'], [84.9, 87], [87, 89, 'm'], [89, 91], [91, 95, 't'], [95, 99, 't'],
    [104, 108, 't'], [108, 112, 't'], [112, 116, 'm']
];

function clip([start, end, kind], cls, title, draw) {
    const left = barX(start);
    const w = Math.max(barX(end) - left + 1, 2);
    const muted = kind === 'm';
    const text = title ? `<span>${title}</span>` : '';
    return `<div class="clip ${cls}${muted ? ' muted' : ''}" style="left:${left}px;width:${w}px">${draw ? `<svg>${draw(w, muted, left, title)}</svg>` : ''}${text}</div>`;
}

function lane(html) {
    canvas.insertAdjacentHTML('beforeend', `<div class="lane">${html}</div>`);
}

// folder clips show small strips for the clips of the tracks inside
function folderLane(clips, cls, title, rows, pitch, thick) {
    return clips.map(c => clip(c, 'folder ' + cls, !c[2] && title, (w, muted, left) => {
        let out = '';
        rows.forEach((row, i) => row.clips.forEach(([s, e]) => {
            const a = Math.max(barX(s), left + 1) - left;
            const b = Math.min(barX(e), left + w - 2) - left;
            if (b > a) {
                out += `<rect x="${a}" y="${2 + i * pitch}" width="${b - a}" height="${thick}" fill="${row.color}"/>`;
            }
        }));
        return out;
    })).join('');
}

// freaky mixdown
const mixLevel = x => {
    const bar = FIRST_BAR + x / BAR_WIDTH;
    if (bar > 99 && bar < 106.500) return 2 + 4 * Math.abs(Math.sin(bar * 2));
    if (bar > 75 && bar < 77.500) return 5;
    if (bar > 106) return 5 + 3 * Math.abs(Math.sin(bar * 1.2));
    return (bar > 51 && bar < 55) || (bar > 79 && bar < 83) ? 9 : 7 + Math.sin(bar * 1.7);
};
lane(`<div class="clip wave" style="left:0;right:0"><svg>${envelope(2400, 10, mixLevel, '#7b8997', '#44484c')}${envelope(2400, 28, mixLevel, '#56677a', '#181c20')}</svg></div>`);

const piano = [[75.4, 76], [77.4, 78.1]];
const synth = [[103, 109]];
lane(folderLane(inst, '', 'INST', [
    { clips: bell, color: '#d8e86a' }, { clips: low, color: '#d8e86a' }, { clips: filter, color: '#d8e86a' },
    { clips: gtr, color: '#7088dc' }, { clips: synth, color: '#7c70dc' }, { clips: piano, color: '#728292' }
], 6, 3));

const yellowTitle = c => c[2] === 't' && 'Omnisphere';
const upper = title => title ? '#b4c050' : '#5a6030';
lane(bell.map(c => clip(c, '', yellowTitle(c), (w, m, l, title) => lineWave(w, 9, .5, 3, upper(title)) + lineWave(w, 28, .1, 3, '#1c200a'))).join(''));
lane(low.map(c => clip(c, '', yellowTitle(c), (w, m, l, title) => lineWave(w, 9, .05, 1, upper(title)) + lineWave(w, 28, .1, 2, '#1c200a'))).join(''));
lane(filter.map(c => clip(c, '', 'Omnisphere', w => lineWave(w, 9, .6, 5, '#b4c050') + lineWave(w, 28, .8, 4, '#1c200a'))).join(''));

const arcs = (w, muted) => `<path d="M2 6q5 1 3 7h-3M2 17h3M2 24q5 1 3 8l-3 2" fill="${muted ? 'none' : '#2746a0'}" stroke="${muted ? '#5a6ea8' : '#16265a'}" stroke-dasharray="2 1"/>`;
const edges = [];
for (let bar = 35; bar <= 99; bar += 4) edges.push(bar);
edges.push(104, 108, 112);
const darkEdges = [39, 55, 59, 75, 91, 104];
lane(gtr.map(c => clip(c, 'blue', '', arcs)).join('')
    + edges.map(b => `<div class="hit navy${darkEdges.includes(b) ? ' dark' : ''}" style="left:${barX(b) - 2}px;width:${darkEdges.includes(b) ? 3 : 4}px"></div>`).join(''));

lane(clip([103, 109, 't'], 'violet', 'Analog Lab V 01 -', w =>
    `<path d="M1 10.500H${w}" stroke="#8074d0"/><path d="M1 28.500H${w}" stroke="#242050"/>` + envelope(35, 28, 2, '#382aa8', '#2a2080', 19) + envelope(70, 28, 2, '#382aa8', '#2a2080', 54)));

const blob = w => [10, 28].map(y => envelope(w - 4, y, x => 4 + 4 * Math.sin(x / w * 3), y < 20 ? '#6f7f8e' : '#516272', y < 20 ? '#3c444a' : '#101418', 2)).join('');
lane(piano.map(c => clip(c, 'grey', '', blob)).join(''));

const bass = [];
for (let bar = 34; bar < 99; bar++) bass.push(bar);
for (let bar = 104; bar < 113; bar++) bass.push(bar);
const bassClips = bass.flatMap(b => [[b, b + .28], [b + .42, b + .82]]);

// drum hits in pixels from the start of a two bar pattern: [x, width, grey]
const patterns = {
    A: [[0, 2], [11, 3], [18, 2], [21, 2], [24, 2], [29, 5]],
    B: [[0, 2], [11, 3], [18, 5], [29, 5]],
    C: [[0, 2], [11, 3], [17, 3], [21, 2], [28, 3], [32, 2, 1]],
    G: [[0, 2], [11, 3, 1], [18, 2], [21, 2], [24, 2], [29, 5, 1]]
};
const order = 'ABGBGBACGBABGBACGBABGBGCABGBGBGB';
const bars = order.split('').map((p, i) => [35 + i * 2, p])
    .concat([[104, 'G'], [106, 'B'], [108, 'G'], [110, 'B'], [112, 'A']]);
const kicks = [[33, 'A'], ...bars].flatMap(([bar, p]) => patterns[p].map(([x, w, grey]) => [barX(bar) + x, w, grey]));
const hit = (x, w, cls) => `<div class="hit ${cls}" style="left:${x}px;width:${w}px"></div>`;

// the DRUM folder has no content between bars 43 and 45
const shown = c => c[0] < 43 || c[0] >= 45.3;
const strips = parts => bars.flatMap(([b]) => parts.map(([s, e]) => [b + s, b + e])).filter(shown);
lane(folderLane(drum, 'drums', 'DRUM', [
    { clips: bassClips.filter(shown), color: '#e8946a' },
    { clips: strips([[0, .15], [.6, .8], [1, 1.4], [1.6, 1.9]]), color: '#e06868' },
    { clips: strips([[1.1, 1.5]]), color: '#7c8c9c' },
    { clips: strips([[.7, .9], [1.7, 1.9]]), color: '#7c8c9c' },
    { clips: strips([[.5, .6]]), color: '#7c8c9c' },
    { clips: [...perc.filter(shown), [45.3, 46.8]], color: '#98dc50' },
    { clips: [[39, 40.4]], color: '#728292' },
    { clips: [[40, 41], [42.5, 42.7]], color: '#728292' },
    { clips: [[42.8, 43]], color: '#728292' },
    { clips: [[63.4, 64], [64.3, 64.9], [65.3, 66]], color: '#728292' },
    { clips: [[62.7, 63]], color: '#728292' },
    { clips: [], color: '' },
    { clips: [[33, 43], [45.3, 99], [104, 116]], color: '#718090' }
], 2.75, 2.75));

const mutedBass = [[51.55, 51.75, 'm'], [67.55, 67.75, 'm'], [74.65, 74.85, 'm'], [79.55, 79.8, 'm']];
lane(bassClips.map(c => clip(c, 'orange', '', w => hooks(w, '#3a2010'))).join('') + mutedBass.map(c => clip(c, '', '')).join(''));
lane(kicks.map(([x, w, grey]) => hit(x, w, grey ? 'ash' : 'red')).join(''));
lane(kicks.map(([x, w, grey]) => hit(x, w, grey ? 'sand' : 'slate')).join(''));

const twoBars = [33, ...bars.map(b => b[0])];
lane(twoBars.flatMap((b, i) => [4, 13, 22, 31, 34].map((x, j) => hit(barX(b) + x, 2, (i + j) % 5 === 3 ? 'sand' : 'slate'))).join(''));
lane(bass.map((b, i) => hit(barX(b) + 10, 2, i % 7 > 3 ? 'sand' : 'slate')).join(''));
lane(perc.map(c => clip(c, 'green', c[2] === 't' && 'Velocity elec', pulseWave)).join(''));

lane([[39, 39.95], [40.05, 40.5], [40.5, 41, 'm']].map(c => clip(c, 'grey', '', blob)).join(''));
const tick = w => `<path d="M2 10h${w - 4}M2 28h${w - 4}M${w - 4} 6v8M${w - 4} 24v8" stroke="#4c5a68"/>`;
lane([[40, 40.55, 'm'], [40.55, 40.85]].map(c => clip(c, 'grey', '', tick)).join('') + clip([42.5, 42.7], 'grey', ''));
lane(clip([40.85, 40.95], 'grey', '') + clip([42.85, 42.95, 'm'], 'grey', ''));
lane(clip([63.4, 63.95], 'grey', '', blob)
    + [[64.45, 64.6], [64.65, 64.75], [64.8, 65], [65.5, 65.65], [65.75, 65.9], [66.45, 66.6], [66.65, 66.85]].map(c => clip(c, 'grey', '')).join(''));
lane(clip([62.7, 63.05], 'grey', '', tick));
```
